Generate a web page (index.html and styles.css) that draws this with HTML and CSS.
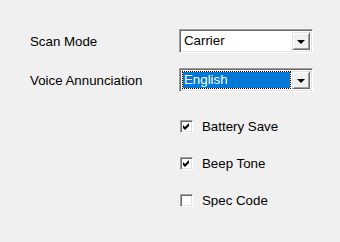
FILE: index.html
```html
<!DOCTYPE html>
<html lang="en">
<head>
    <meta charset="UTF-8">
    <title>Options</title>
    <link rel="stylesheet" href="styles.css">
</head>
<body>
    <div class="panel">
        <div class="row">
            <span class="label">Scan Mode</span>
            <div class="combo">
                <div class="field"><span class="value">Carrier</span></div>
                <div class="drop"><span class="arrow"></span></div>
            </div>
        </div>
        <div class="row row-second">
            <span class="label">Voice Annunciation</span>
            <div class="combo">
                <div class="field"><span class="value selected">English</span></div>
                <div class="drop"><span class="arrow"></span></div>
            </div>
        </div>

        <div class="checks">
            <div class="check">
                <span class="box">
                    <svg class="tick" width="9" height="9" viewBox="0 0 9 9"><polygon points="1,3 3,5 7,1 7,4 3,8 1,6"/></svg>
                </span>
                <span>Battery Save</span>
            </div>
            <div class="check">
                <span class="box">
                    <svg class="tick" width="9" height="9" viewBox="0 0 9 9"><polygon points="1,3 3,5 7,1 7,4 3,8 1,6"/></svg>
                </span>
                <span>Beep Tone</span>
            </div>
            <div class="check">
                <span class="box"></span>
                <span>Spec Code</span>
            </div>
        </div>
    </div>
</body>
</html>
```

FILE: styles.css
```css
body {
    margin: 0;
    background: #f0f0f0;
    font-family: 'Liberation Sans', Arial, sans-serif;
    font-size: 13.3px;
    color: #000;
}

.panel {
    padding: 29px 0 0 30px;
}

.row {
    display: flex;
    align-items: center;
    height: 24px;
}

.row-second {
    margin-top: 15px;
}

.label {
    width: 149px;
}

.combo {
    width: 134px;
    height: 24px;
    box-sizing: border-box;
    display: flex;
    align-items: center;
    background: #fff;
    border: 1px solid;
    border-color: #a0a0a0 #fff #fff #a0a0a0;
    box-shadow: inset 1px 1px 0 #696969, inset -1px -1px 0 #e3e3e3;
    padding: 2px 2px 2px 3px;
}

.field {
    flex: 1;
    height: 100%;
    display: flex;
    align-items: center;
}

.value {
    padding: 0 1px;
    line-height: 16px;
}

.value.selected {
    flex: 1;
    margin-right: 2px;
    background: #0078d7;
    color: #fff;
    outline: 1px dotted #000;
}

.drop {
    width: 18px;
    height: 18px;
    box-sizing: border-box;
    background: #f0f0f0;
    border: 1px solid;
    border-color: #e3e3e3 #696969 #696969 #e3e3e3;
    box-shadow: inset 1px 1px 0 #fff, inset -1px -1px 0 #a0a0a0;
    display: flex;
    align-items: center;
    justify-content: center;
}

.arrow {
    width: 0;
    height: 0;
    border-left: 4px solid transparent;
    border-right: 4px solid transparent;
    border-top: 4px solid #000;
    margin-top: 1px;
}

.checks {
    margin-left: 150px;
    margin-top: 28px;
    display: flex;
    flex-direction: column;
    gap: 24px;
}

.check {
    display: flex;
    align-items: center;
    height: 13px;
}

.box {
    width: 13px;
    height: 13px;
    box-sizing: border-box;
    background: #fff;
    border: 1px solid;
    border-color: #a0a0a0 #fff #fff #a0a0a0;
    box-shadow: inset 1px 1px 0 #696969, inset -1px -1px 0 #e3e3e3;
    margin-right: 9px;
    position: relative;
}

.tick {
    position: absolute;
    left: 1px;
    top: 1px;
    fill: #000;
}
```
